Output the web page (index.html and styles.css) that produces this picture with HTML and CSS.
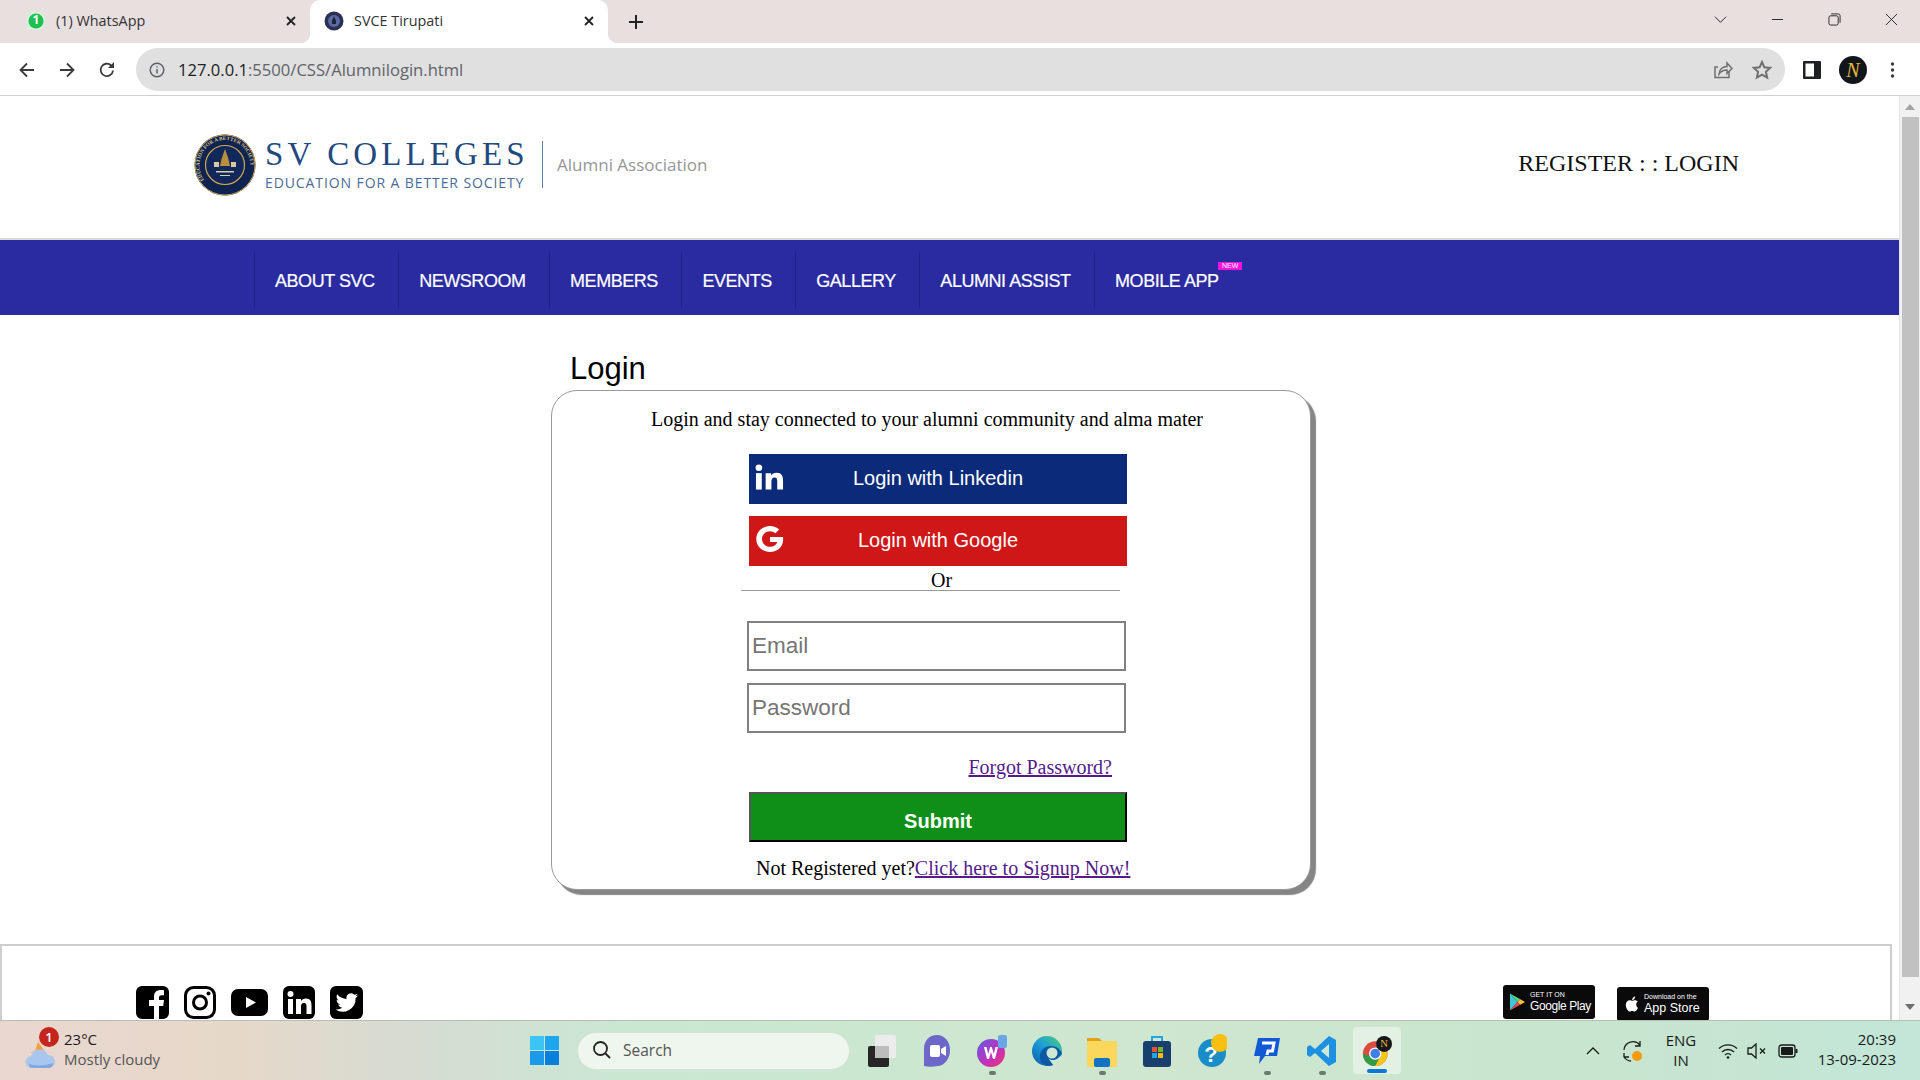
FILE: index.html
```html
<!DOCTYPE html>
<html lang="en">
<head>
  <meta charset="UTF-8" />
  <meta name="viewport" content="width=device-width, initial-scale=1.0"/>
  <title>SVCE Tirupati</title>
  <link rel="stylesheet" href="styles.css">
</head>
<body>
  <div class="tabstrip">
    <div class="tab">
      <svg class="favicon" viewBox="0 0 20 20"><path d="M10 1a9 9 0 0 0-7.700 13.600L1 19l4.600-1.200A9 9 0 1 0 10 1z" fill="#d8f5e0"/><circle cx="10" cy="10" r="7.600" fill="#1fc04f"/></svg>
      <span class="favicon-count">1</span>
      <span class="tab-title">(1) WhatsApp</span>
      <svg class="tab-close" viewBox="0 0 12 12"><path d="M2 2l8 8M10 2l-8 8"/></svg>
    </div>
    <div class="tab tab-active">
      <svg class="favicon" viewBox="0 0 20 20"><circle cx="10" cy="10" r="9.500" fill="#2a2f55"/><circle cx="10" cy="10" r="6" fill="#5b6aa0"/><path d="M10 5l2 5v3H8v-3z" fill="#1d2140"/></svg>
      <span class="tab-title">SVCE Tirupati</span>
      <svg class="tab-close" viewBox="0 0 12 12"><path d="M2 2l8 8M10 2l-8 8"/></svg>
    </div>
    <svg class="tab-new" viewBox="0 0 16 16"><path d="M8 1v14M1 8h14"/></svg>
    <div class="window-controls">
      <svg viewBox="0 0 14 14"><path d="M1 4l6 6 6-6"/></svg>
      <svg viewBox="0 0 14 14"><path d="M1 7h12"/></svg>
      <svg viewBox="0 0 14 14"><rect x="1" y="3" width="10" height="10" rx="2"/><path d="M3.500 1H11a2 2 0 0 1 2 2v7.500"/></svg>
      <svg viewBox="0 0 14 14"><path d="M1 1l12 12M13 1L1 13"/></svg>
    </div>
  </div>

  <div class="toolbar">
    <svg class="nav-btn" viewBox="0 0 18 18"><path d="M16 9H3M9 2.500L2.500 9 9 15.500"/></svg>
    <svg class="nav-btn" viewBox="0 0 18 18"><path d="M2 9h13M9 2.500L15.500 9 9 15.500"/></svg>
    <svg class="nav-btn" viewBox="0 0 18 18"><path d="M15 9.500A6.200 6.200 0 1 1 13.200 4.500"/><path class="solid" d="M16 1v6h-6z"/></svg>
    <div class="omnibox">
      <svg class="omni-info" viewBox="0 0 16 16"><circle cx="8" cy="8" r="6.800"/><path d="M8 7v4.500M8 4.200v1.300"/></svg>
      <span class="url"><span class="url-host">127.0.0.1</span>:5500/CSS/Alumnilogin.html</span>
      <svg class="omni-share" viewBox="0 0 20 20"><path d="M16 11v6.500H2V7h3"/><path d="M6 14c.500-5 4-7.500 8-7.500V3l5 5.500-5 5V10c-3.500 0-6 1.200-8 4z"/></svg>
      <svg class="omni-star" viewBox="0 0 20 20"><path d="M10 2l2.400 5.300 5.800.600-4.300 3.900 1.200 5.700L10 14.600l-5.100 2.900 1.200-5.700L1.800 7.900l5.800-.600z"/></svg>
    </div>
    <svg class="sidebar-btn" viewBox="0 0 18 18"><rect width="18" height="18" rx="1" fill="#202124"/><rect x="2.500" y="2.500" width="8.500" height="13" fill="#fff"/></svg>
    <div class="avatar">N</div>
    <svg class="menu-btn" viewBox="0 0 4 16"><circle cx="2" cy="2" r="1.700"/><circle cx="2" cy="8" r="1.700"/><circle cx="2" cy="14" r="1.700"/></svg>
  </div>

  <div class="viewport">
    <div class="page">
      <header class="site-header">
        <div class="logo">
          <svg class="seal" viewBox="0 0 62 62">
            <defs><path id="seal-arc" d="M10 46A25.500 25.500 0 1 1 52 46"/></defs>
            <circle cx="31" cy="31" r="30.500" fill="#0f2350"/>
            <circle cx="31" cy="31" r="30" fill="none" stroke="#c9a65a" stroke-width="1"/>
            <circle cx="31" cy="31" r="19.500" fill="#12275a" stroke="#cfa94f" stroke-width="1.200"/>
            <text class="seal-ring"><textPath href="#seal-arc">EDUCATION FOR A BETTER SOCIETY</textPath></text>
            <path d="M31 15l3.500 10 1.500 7H26l1.500-7z" fill="#b98f3e"/>
            <path d="M20 28h5v5h-5zM37 28h5v5h-5z" fill="#d8c9a0"/>
            <path d="M22 37h18v1.500H22zM26 41h10v1H26z" fill="#d8cfae"/>
          </svg>
          <div class="logo-words">
            <div class="logo-name">SV COLLEGES</div>
            <div class="logo-tag">EDUCATION FOR A BETTER SOCIETY</div>
          </div>
          <div class="logo-rule"></div>
          <div class="logo-assoc">Alumni Association</div>
        </div>
        <div class="auth-links">REGISTER : : LOGIN</div>
      </header>

      <nav class="main-nav">
        <a class="nav-item">ABOUT SVC</a>
        <a class="nav-item">NEWSROOM</a>
        <a class="nav-item">MEMBERS</a>
        <a class="nav-item">EVENTS</a>
        <a class="nav-item">GALLERY</a>
        <a class="nav-item">ALUMNI ASSIST</a>
        <a class="nav-item">MOBILE APP<span class="new-badge">NEW</span></a>
      </nav>

      <main class="login-wrap">
        <h1 class="login-title">Login</h1>
        <div class="login-card">
          <p class="login-intro">Login and stay connected to your alumni community and alma mater</p>
          <button class="social-btn btn-linkedin">
            <svg class="social-icon" viewBox="0 0 30 26"><rect x="1" y="9" width="6" height="17"/><circle cx="4" cy="3.500" r="3.400"/><path d="M11 9h5.700v2.500c1-1.700 3-3 5.600-3 5.300 0 6.700 3.500 6.700 8V26h-6v-8.500c0-2-.300-4-2.700-4-2.500 0-3.300 1.900-3.300 4V26h-6z"/></svg>
            Login with Linkedin
          </button>
          <button class="social-btn btn-google">
            <svg class="social-icon" viewBox="0 0 28 26"><path d="M27.500 11H14.500v5h7.300c-.800 3-3.600 4.800-7.300 4.800-4.400 0-8-3.400-8-7.800s3.600-7.800 8-7.800c2.200 0 4 .800 5.400 2l3.800-3.700C21.300 1.200 18.100 0 14.500 0 6.900 0 .800 5.800.800 13s6.100 13 13.700 13c7.400 0 13.200-5 13.200-13 0-.700-.100-1.300-.200-2z"/></svg>
            Login with Google
          </button>
          <div class="or-line">Or</div>
          <input class="login-input input-email" type="text" placeholder="Email">
          <input class="login-input input-password" type="password" placeholder="Password">
          <div class="forgot"><a href="#">Forgot Password?</a></div>
          <button class="submit-btn">Submit</button>
          <div class="signup">Not Registered yet?<a href="#">Click here to Signup Now!</a></div>
        </div>
      </main>

      <footer class="site-footer">
        <div class="social-row">
          <svg class="soc soc-fb" viewBox="0 0 33 33"><rect width="33" height="33" rx="6"/><path class="cut" d="M18 33V20h-5v-6h5v-3.500C18 6 21 4 25 4c1.500 0 3 .200 3 .200v5h-2.300c-2 0-2.700 1.200-2.700 2.600V14h5l-.800 6H23v13z"/></svg>
          <svg class="soc soc-ig" viewBox="0 0 32 33"><rect x="1.500" y="1.500" width="29" height="30" rx="8" fill="none" stroke="#000" stroke-width="3"/><circle cx="16" cy="16.500" r="6.500" fill="none" stroke="#000" stroke-width="3"/><circle cx="24.500" cy="7.500" r="2"/></svg>
          <svg class="soc soc-yt" viewBox="0 0 37 27"><rect width="37" height="27" rx="7"/><path class="cut" d="M15 8l10 5.500L15 19z"/></svg>
          <svg class="soc soc-in" viewBox="0 0 32 33"><rect width="32" height="33" rx="6"/><rect class="cut" x="5" y="13" width="5" height="15"/><circle class="cut" cx="7.500" cy="8" r="3"/><path class="cut" d="M13 13h5v2c1-1.500 2.500-2.500 5-2.500 4.500 0 5.500 3 5.500 7V28h-5v-7.500c0-1.800-.300-3.500-2.500-3.500s-3 1.700-3 3.500V28h-5z"/></svg>
          <svg class="soc soc-tw" viewBox="0 0 33 33"><rect width="33" height="33" rx="6"/><path class="cut" d="M28 9.500c-.800.400-1.700.600-2.600.700.900-.600 1.700-1.400 2-2.500-.900.500-1.900.900-2.900 1.100a4.600 4.600 0 0 0-7.900 4.200C12.800 12.800 9.500 11 7.200 8.200c-1.200 2.100-.600 4.800 1.400 6.100-.700 0-1.400-.200-2-.600 0 2.200 1.500 4.100 3.700 4.600-.700.200-1.400.200-2.100.100.600 1.900 2.300 3.200 4.300 3.200A9.300 9.300 0 0 1 5.500 23.500 13 13 0 0 0 25.600 12c.900-.600 1.800-1.500 2.400-2.500z"/></svg>
        </div>
        <div class="store-row">
          <div class="store-badge badge-play">
            <svg class="store-icon" viewBox="0 0 16 18"><path d="M0 0l8 9-8 9z" fill="#3bc8d8"/><path d="M0 0l11 6-3 3z" fill="#5fd17f"/><path d="M0 18l11-6-3-3z" fill="#e8455a"/><path d="M11 6l5 3-5 3-3-3z" fill="#f7c33b"/></svg>
            <div class="store-text"><span class="store-small">GET IT ON</span><span class="store-big store-big-thin">Google Play</span></div>
          </div>
          <div class="store-badge badge-apple">
            <svg class="store-icon" viewBox="0 0 16 18"><path d="M13 9.500c0-2 1.600-3 1.700-3.100-1-1.300-2.400-1.500-2.900-1.500-1.200-.100-2.400.700-3 .700s-1.600-.700-2.700-.700C4.700 5 3.300 5.800 2.600 7c-1.400 2.400-.400 6.100 1 8 .700 1 1.500 2 2.500 2s1.400-.600 2.600-.600 1.500.600 2.600.600 1.800-1 2.400-1.900c.800-1.100 1.100-2.200 1.100-2.200s-1.800-.900-1.800-3.400zM11 3.600c.500-.700.900-1.600.800-2.600-.800 0-1.700.500-2.300 1.200-.500.600-.900 1.500-.800 2.400.900.100 1.800-.400 2.300-1z" fill="#fff"/></svg>
            <div class="store-text"><span class="store-small">Download on the</span><span class="store-big">App Store</span></div>
          </div>
        </div>
      </footer>
    </div>

    <div class="scrollbar">
      <div class="scroll-up"></div>
      <div class="scroll-thumb"></div>
      <div class="scroll-down"></div>
    </div>
  </div>

  <div class="taskbar">
    <div class="weather">
      <svg class="weather-icon" viewBox="0 0 32 32"><path d="M4 15l7-2 3-9 6 8z" fill="#f2a13a"/><path d="M8 30a6 6 0 0 1-1-12 9 9 0 0 1 17-1 6.500 6.500 0 0 1 1 13z" fill="#a9c6ef"/><path d="M5 26c6 2 16 2 24-1v2c-2 3-4 3-6 3H8c-2 0-3-2-3-4z" fill="#84a6e0"/></svg>
      <span class="weather-badge">1</span>
      <div class="weather-text">
        <div class="weather-temp">23°C</div>
        <div class="weather-desc">Mostly cloudy</div>
      </div>
    </div>
    <svg class="win-logo" viewBox="0 0 29 29">
      <rect width="14" height="14" fill="#3cc4f5"/><rect x="15" width="14" height="14" fill="#1fa6ec"/>
      <rect y="15" width="14" height="14" fill="#1a9ae8"/><rect x="15" y="15" width="14" height="14" fill="#0a7fdc"/>
    </svg>
    <div class="search-box">
      <svg class="search-icon" viewBox="0 0 20 20"><circle cx="8.500" cy="8.500" r="6.500"/><path d="M13.500 13.500L18 18"/></svg>
      <span>Search</span>
    </div>
    <div class="task-icons">
      <div class="task-slot">
        <svg viewBox="0 0 30 34"><rect x="1" y="12" width="21" height="21" rx="2" fill="#262626"/><rect x="8" y="1" width="21" height="23" rx="2" fill="#ececec"/><rect x="8" y="12" width="14" height="12" fill="#bdbdbd"/></svg>
      </div>
      <div class="task-slot">
        <svg viewBox="0 0 30 34"><path d="M15 1C7 1 2 7 2 15v17c4 1 9 1 13 0 8 0 13-8 13-16S23 1 15 1z" fill="#6c67c9"/><rect x="8" y="11" width="10" height="12" rx="2" fill="#fff"/><path d="M19 15l5-3v10l-5-3z" fill="#fff"/></svg>
      </div>
      <div class="task-slot has-dot">
        <svg viewBox="0 0 30 34"><defs><linearGradient id="wps" x1="0" y1="0" x2="1" y2="1"><stop offset="0" stop-color="#5e5ce6"/><stop offset=".6" stop-color="#c72fb8"/><stop offset="1" stop-color="#f03a6a"/></linearGradient></defs><circle cx="14" cy="19" r="14" fill="url(#wps)"/><path d="M7 13l3 12h2l2-7 2 7h2l3-12h-2.500l-1.700 7-2-7h-1.600l-2 7-1.700-7z" fill="#fff"/><rect x="21" y="1" width="9" height="13" rx="2" fill="#6aa7e8"/></svg>
      </div>
      <div class="task-slot">
        <svg viewBox="0 0 30 34"><defs><linearGradient id="edge" x1="1" y1="0" x2="0" y2="1"><stop offset="0" stop-color="#4fd27a"/><stop offset=".5" stop-color="#1a9bd8"/><stop offset="1" stop-color="#0c59a4"/></linearGradient></defs><circle cx="15" cy="17" r="15" fill="url(#edge)"/><path d="M30 20c-1 7-7 12-13 12-7 0-10-6-9-11 1-6 6-9 11-9 6 0 10 4 11 8z" fill="#0c59a4"/><circle cx="20" cy="19" r="5.500" fill="#cde8d4"/><path d="M16 24c4 4 10 2 14-4l-1 6-7 6z" fill="#cde8d4"/></svg>
      </div>
      <div class="task-slot has-dot">
        <svg viewBox="0 0 30 34"><path d="M0 4h12l3 3v4H0z" fill="#e4a11b"/><rect y="7" width="30" height="26" rx="1" fill="#fbd75b"/><rect x="7" y="24" width="16" height="9" rx="2" fill="#1273c4"/></svg>
      </div>
      <div class="task-slot">
        <svg viewBox="0 0 30 34"><path d="M10 7V3h10v4" fill="none" stroke="#22a6e0" stroke-width="2"/><rect x="1" y="7" width="28" height="26" rx="3" fill="#17406e"/><rect x="10" y="13" width="5" height="5" fill="#e9522c"/><rect x="16" y="13" width="5" height="5" fill="#7db52a"/><rect x="10" y="19" width="5" height="5" fill="#1ea5ea"/><rect x="16" y="19" width="5" height="5" fill="#fbbb12"/></svg>
      </div>
      <div class="task-slot">
        <svg viewBox="0 0 30 34"><circle cx="15" cy="19" r="14" fill="#1a8dc8"/><text class="help-mark" x="14" y="28" text-anchor="middle">?</text><circle cx="23" cy="9" r="9" fill="#fbbf0f"/></svg>
      </div>
      <div class="task-slot has-dot">
        <svg viewBox="0 0 30 34"><path d="M6 4h22l-3 18H13l-6 8 1-8H2z" fill="#1259d8"/><path d="M10 9h12l-1.500 8H16l-1 4" fill="none" stroke="#fff" stroke-width="3"/></svg>
      </div>
      <div class="task-slot has-dot">
        <svg viewBox="0 0 30 34"><path d="M22 2l7 4v22l-7 4-14-13-5 4-3-2v-8l3-2 5 4z" fill="#1e90e2"/><path d="M22 10l-8 7 8 7z" fill="#cde8d4"/></svg>
      </div>
      <div class="task-slot is-active">
        <svg viewBox="0 0 34 36"><circle cx="15" cy="21" r="14" fill="#dd4b3e"/><path d="M1 21a14 14 0 0 0 14 14l6-11H9z" fill="#2e9d48"/><path d="M29 21a14 14 0 0 1-14 14l7-13-2-6h7z" fill="#f8c51c"/><circle cx="15" cy="21" r="7" fill="#fff"/><circle cx="15" cy="21" r="5.500" fill="#3f7fe8"/><circle cx="25" cy="10" r="9" fill="#15171b"/><text class="chrome-n" x="25" y="14" text-anchor="middle">N</text></svg>
      </div>
    </div>
    <div class="tray">
      <svg class="tray-chevron" viewBox="0 0 14 8"><path d="M1 7l6-6 6 6"/></svg>
      <svg class="tray-sync" viewBox="0 0 22 22"><path d="M2 10a9 9 0 0 1 16-5"/><path d="M18 1v5h-5"/><path d="M2 17h5M2 13v4a9 9 0 0 0 7 4"/><circle class="sync-dot" cx="15" cy="16" r="5"/></svg>
      <div class="tray-lang"><div>ENG</div><div>IN</div></div>
      <svg class="tray-wifi" viewBox="0 0 20 16"><path d="M1 5.500a13 13 0 0 1 18 0M4 9a8.500 8.500 0 0 1 12 0M7 12a4 4 0 0 1 6 0"/><circle class="solid" cx="10" cy="14.500" r="1.300"/></svg>
      <svg class="tray-mute" viewBox="0 0 20 16"><path d="M1 5h3.500L9 1v14l-4.500-4H1z"/><path d="M13 5.500l5 5M18 5.500l-5 5"/></svg>
      <svg class="tray-battery" viewBox="0 0 20 14"><rect x="1" y="1" width="16" height="12" rx="2.500"/><rect class="solid" x="3" y="3" width="12" height="8" rx="1"/><rect class="solid" x="17.500" y="5" width="2" height="4"/></svg>
      <div class="tray-clock"><div>20:39</div><div>13-09-2023</div></div>
    </div>
  </div>
</body>
</html>
```

FILE: styles.css
```css
* {
  margin: 0;
  padding: 0;
  box-sizing: border-box;
}

html, body {
  width: 1920px;
  height: 1080px;
  overflow: hidden;
}

body {
  display: flex;
  flex-direction: column;
  font-family: "Liberation Serif", serif;
  background: #fff;
  color: #000;
}

/* browser tabs */
.tabstrip {
  height: 43px;
  display: flex;
  align-items: center;
  background: #e8dfdf;
  font-family: "Open Sans", sans-serif;
  font-size: 14.400px;
  color: #333;
}

.tab {
  position: relative;
  width: 310px;
  height: 43px;
  display: flex;
  align-items: center;
  padding: 0 13px 2px 26px;
}

.tab-active {
  width: 298px;
  padding-left: 14px;
  background: #fff;
  border-radius: 10px 10px 0 0;
}

.tab-active::before, .tab-active::after {
  content: "";
  position: absolute;
  bottom: 0;
  width: 10px;
  height: 10px;
}

.tab-active::before {
  left: -10px;
  background: radial-gradient(circle at 0 0, transparent 10px, #fff 10.500px);
}

.tab-active::after {
  right: -10px;
  background: radial-gradient(circle at 100% 0, transparent 10px, #fff 10.500px);
}

.favicon {
  width: 20px;
  height: 20px;
  margin-right: 10px;
  flex: none;
}

.favicon-count {
  position: absolute;
  left: 26px;
  top: 11px;
  width: 20px;
  text-align: center;
  font-size: 12px;
  font-weight: 700;
  color: #fff;
}

.tab-title {
  flex: 1;
}

.tab-close {
  width: 12px;
  height: 12px;
  fill: none;
  stroke: #222;
  stroke-width: 1.8;
}

.tab-new {
  width: 16px;
  height: 16px;
  margin-left: 20px;
  fill: none;
  stroke: #222;
  stroke-width: 2;
}

.window-controls {
  margin-left: auto;
  display: flex;
  gap: 44px;
  padding-right: 22px;
  margin-bottom: 5px;
}

.window-controls svg {
  width: 13px;
  height: 13px;
  fill: none;
  stroke: #222;
  stroke-width: 1;
}

/* address bar */
.toolbar {
  height: 53px;
  display: flex;
  align-items: center;
  padding-top: 1px;
  background: #fff;
  border-bottom: 1px solid #d0d0d0;
}

.nav-btn {
  width: 18px;
  height: 18px;
  margin-left: 22px;
  fill: none;
  stroke: #3a3a3a;
  stroke-width: 1.8;
}

.nav-btn:first-child {
  margin-left: 18px;
}

.nav-btn .solid {
  fill: #3a3a3a;
  stroke: none;
}

.omnibox {
  width: 1649px;
  height: 43px;
  margin-left: 20px;
  display: flex;
  align-items: center;
  padding: 0 13px;
  background: #e0e0e0;
  border-radius: 22px;
}

.omni-info {
  width: 16px;
  height: 16px;
  flex: none;
  fill: none;
  stroke: #5f6368;
  stroke-width: 1.500;
}

.url {
  margin-left: 13px;
  flex: 1;
  font-family: "Open Sans", sans-serif;
  font-size: 16.600px;
  color: #5f6368;
}

.url-host {
  color: #202124;
}

.omni-share, .omni-star {
  width: 20px;
  height: 20px;
  fill: none;
  stroke: #6f6f6f;
  stroke-width: 1.500;
}

.omni-star {
  margin-left: 19px;
  stroke-width: 2;
}

.sidebar-btn {
  width: 18px;
  height: 18px;
  margin-left: 18px;
}

.avatar {
  width: 28px;
  height: 28px;
  margin-left: 18px;
  border-radius: 50%;
  background: #11151c;
  color: #e3b93c;
  font-size: 20px;
  font-style: italic;
  line-height: 28px;
  text-align: center;
}

.menu-btn {
  width: 5px;
  height: 16px;
  margin-left: 23px;
  fill: #3a3a3a;
}

/* page area */
.viewport {
  flex: 1;
  min-height: 0;
  display: flex;
}

.page {
  width: 1899px;
  overflow: hidden;
}

.site-header {
  height: 144px;
  display: flex;
  align-items: center;
  justify-content: space-between;
  padding: 0 160px 5px 194px;
  border-bottom: 2px solid #ddd8d4;
}

.logo {
  display: flex;
  align-items: center;
}

.seal {
  width: 62px;
  height: 62px;
  margin-right: 9px;
}

.seal-ring {
  font-family: "Liberation Serif", serif;
  font-size: 5.200px;
  font-weight: 700;
  fill: #d9c48c;
}

.logo-words {
  width: 264px;
}

.logo-name {
  font-family: "Liberation Serif", serif;
  font-size: 33px;
  line-height: 30px;
  letter-spacing: 4.100px;
  color: #1f4a80;
  white-space: nowrap;
}

.logo-tag {
  margin-top: 6px;
  font-family: "Open Sans", sans-serif;
  font-size: 14px;
  line-height: 16px;
  letter-spacing: 0.900px;
  color: #4a6c98;
  white-space: nowrap;
}

.logo-rule {
  width: 1px;
  height: 47px;
  margin-left: 13px;
  background: #5d82aa;
}

.logo-assoc {
  margin-left: 14px;
  font-family: "Open Sans", sans-serif;
  font-size: 17px;
  color: #969696;
}

.auth-links {
  margin-bottom: 2px;
  font-size: 24px;
  color: #111;
}

.main-nav {
  height: 75px;
  display: flex;
  align-items: center;
  padding: 4px 0 0 254px;
  background: #2b2ba1;
}

.nav-item {
  position: relative;
  height: 56px;
  display: flex;
  align-items: center;
  padding: 3px 23.500px 0 20px;
  border-left: 1px solid #1f1f86;
  font-family: "Liberation Sans", sans-serif;
  font-size: 18px;
  letter-spacing: -0.45px;
  -webkit-text-stroke: 0.2px #fff;
  color: #fff;
}

.new-badge {
  position: absolute;
  right: 0;
  top: 10px;
  width: 24px;
  height: 8px;
  background: #f414e0;
  font-size: 7px;
  line-height: 8px;
  letter-spacing: 0;
  text-align: center;
  -webkit-text-stroke: 0;
}

/* login card */
.login-wrap {
  padding: 36px 0 0 551px;
}

.login-title {
  height: 39px;
  padding-left: 19px;
  font-family: "Liberation Sans", sans-serif;
  font-size: 31px;
  font-weight: 400;
  line-height: 36px;
}

.login-card {
  width: 760px;
  height: 500px;
  padding-top: 16px;
  background: #fff;
  border: 1px solid #999;
  border-radius: 26px;
  box-shadow: 5px 5px 1px #858585;
}

.login-intro {
  font-size: 20px;
  line-height: 24px;
  margin-right: 8px;
  text-align: center;
}

.social-btn {
  position: relative;
  display: block;
  width: 378px;
  height: 50px;
  margin: 12px 0 0 197px;
  padding-bottom: 2px;
  border: none;
  font-family: "Liberation Sans", sans-serif;
  font-size: 20px;
  color: #fff;
}

.btn-linkedin {
  margin-top: 23px;
  background: #0c2a7a;
}

.btn-google {
  background: #d01717;
}

.social-icon {
  position: absolute;
  left: 6px;
  top: 10px;
  width: 29px;
  height: 26px;
  fill: #fff;
}

.or-line {
  width: 379px;
  height: 25px;
  margin-left: 189px;
  padding-left: 22px;
  border-bottom: 1px solid #9a9a9a;
  font-size: 20px;
  line-height: 29px;
  text-align: center;
}

.login-input {
  display: block;
  width: 379px;
  height: 50px;
  margin: 12px 0 0 195px;
  padding: 0 3px 1px;
  background: #fff;
  border: 2.500px solid #808080;
  font-family: "Liberation Sans", sans-serif;
  font-size: 22.500px;
}

.input-email {
  margin-top: 30px;
}

.forgot {
  margin-top: 22px;
  padding-right: 198px;
  font-size: 20px;
  line-height: 24px;
  text-align: right;
}

a {
  color: #551a8b;
}

.submit-btn {
  display: block;
  width: 378px;
  height: 50px;
  margin: 13px 0 0 197px;
  padding-top: 8px;
  background: #0f8f17;
  border: 2.500px solid #000;
  border-color: #555 #000 #000 #555;
  font-family: "Liberation Sans", sans-serif;
  font-size: 20px;
  font-weight: 700;
  color: #fff;
}

.signup {
  margin: 14px 0 0 204px;
  font-size: 20px;
  line-height: 24px;
  white-space: nowrap;
}

/* footer */
.site-footer {
  width: 1892px;
  height: 120px;
  margin-top: 54px;
  display: flex;
  justify-content: space-between;
  padding: 40px 181px 0 134px;
  border: 2px solid #d0cdcd;
}

.social-row {
  display: flex;
  align-items: flex-start;
  gap: 15px;
}

.soc {
  height: 33px;
  flex: none;
}

.soc .cut {
  fill: #fff;
}

.soc-fb {
  width: 33px;
}

.soc-ig {
  width: 32px;
}

.soc-yt {
  width: 37px;
  height: 27px;
  margin-top: 3px;
}

.soc-in {
  width: 32px;
}

.soc-tw {
  width: 33px;
}

.store-row {
  display: flex;
  align-items: flex-start;
  gap: 22px;
  margin-top: -1px;
}

.store-badge {
  width: 92px;
  height: 34px;
  display: flex;
  align-items: center;
  padding-left: 7px;
  background: #0a0a0a;
  border-radius: 3px;
  color: #fff;
  font-family: "Liberation Sans", sans-serif;
}

.badge-apple {
  margin-top: 2px;
}

.store-icon {
  width: 15px;
  height: 18px;
  margin-right: 5px;
  flex: none;
}

.store-text {
  display: flex;
  flex-direction: column;
  white-space: nowrap;
}

.store-small {
  font-size: 7px;
  line-height: 8px;
}

.store-big {
  font-size: 12.500px;
  line-height: 15px;
}

.store-big-thin {
  font-size: 12px;
  letter-spacing: -0.4px;
}

.scrollbar {
  width: 21px;
  padding-left: 2px;
  background: #f1f1f1;
  display: flex;
  flex-direction: column;
  border-left: 1px solid #e6e6e6;
}

.scroll-up, .scroll-down {
  width: 0;
  height: 0;
  margin-left: 3px;
  border-left: 5px solid transparent;
  border-right: 5px solid transparent;
}

.scroll-up {
  margin-top: 8px;
  border-bottom: 6px solid #a3a3a3;
}

.scroll-thumb {
  width: 17px;
  height: 860px;
  margin-top: 7px;
  background: #c1c1c1;
}

.scroll-down {
  margin-top: 27px;
  border-top: 6px solid #6e6e6e;
}

/* windows taskbar */
.taskbar {
  height: 60px;
  display: flex;
  align-items: center;
  border-top: 1px solid #b5bfb5;
  background: linear-gradient(90deg, #ead7d0 0%, #e6d8c9 12%, #d6dcd3 22%, #c9e8d2 33%, #cfe6cf 60%, #c7e5cf 85%, #c3e6d8 100%);
  font-family: "Open Sans", sans-serif;
  color: #1a1a1a;
}

.weather {
  position: relative;
  width: 530px;
  height: 59px;
  display: flex;
  align-items: center;
  padding-left: 24px;
}

.weather-icon {
  width: 32px;
  height: 32px;
  margin-top: 6px;
  flex: none;
}

.weather-badge {
  position: absolute;
  left: 39px;
  top: 6px;
  width: 20px;
  height: 20px;
  border-radius: 50%;
  background: #c4261d;
  color: #fff;
  font-size: 13px;
  font-weight: 600;
  line-height: 20px;
  text-align: center;
}

.weather-text {
  margin: 0 0 4px 8px;
  font-size: 15px;
  line-height: 20px;
}

.weather-desc {
  color: #555;
}

.win-logo {
  width: 29px;
  height: 29px;
  flex: none;
}

.search-box {
  width: 273px;
  height: 38px;
  margin-left: 18px;
  display: flex;
  align-items: center;
  gap: 11px;
  padding: 0 0 1px 14px;
  background: #eef6ee;
  border-radius: 19px;
  border: 1px solid #d5e2d5;
  font-size: 15.500px;
  color: #555;
}

.search-icon {
  width: 20px;
  height: 20px;
  fill: none;
  stroke: #222;
  stroke-width: 1.800;
}

.task-icons {
  margin-left: 8px;
  display: flex;
  flex: none;
}

.task-slot {
  position: relative;
  width: 48px;
  height: 47px;
  margin-right: 7px;
  display: flex;
  align-items: center;
  justify-content: center;
  border-radius: 4px;
}

.task-slot svg {
  width: 30px;
  height: 34px;
}

.has-dot::after {
  content: "";
  position: absolute;
  bottom: -1px;
  left: 21px;
  width: 7px;
  height: 4px;
  border-radius: 2px;
  background: #6b7a6d;
}

.is-active {
  background: #e3f1e4;
}

.is-active::after {
  content: "";
  position: absolute;
  bottom: 1px;
  left: 14px;
  width: 20px;
  height: 4px;
  border-radius: 2px;
  background: #0a78d4;
}

.help-mark {
  font-family: "Liberation Sans", sans-serif;
  font-size: 22px;
  font-weight: 700;
  fill: #fff;
}

.chrome-n {
  font-family: "Liberation Serif", serif;
  font-size: 12px;
  fill: #e3b93c;
}

.tray {
  flex: 1;
  min-width: 0;
  display: flex;
  align-items: center;
  font-size: 15px;
  line-height: 20px;
}

.tray svg {
  fill: none;
  stroke: #1a1a1a;
  stroke-width: 1.300;
  flex: none;
}

.tray .solid {
  fill: #1a1a1a;
  stroke: none;
}

.tray-chevron {
  width: 14px;
  height: 8px;
  margin-left: 178px;
}

.tray-sync {
  width: 22px;
  height: 22px;
  margin-left: 22px;
}

.tray .sync-dot {
  fill: #f59a0c;
  stroke: none;
}

.tray-lang {
  width: 44px;
  margin: 0 0 2px 15px;
  text-align: center;
}

.tray-wifi {
  width: 20px;
  height: 16px;
  margin-left: 15px;
}

.tray-mute {
  width: 20px;
  height: 16px;
  margin-left: 9px;
}

.tray-battery {
  width: 20px;
  height: 14px;
  margin-left: 11px;
}

.tray-clock {
  margin: 0 0 4px auto;
  padding-right: 24px;
  text-align: right;
}
```
